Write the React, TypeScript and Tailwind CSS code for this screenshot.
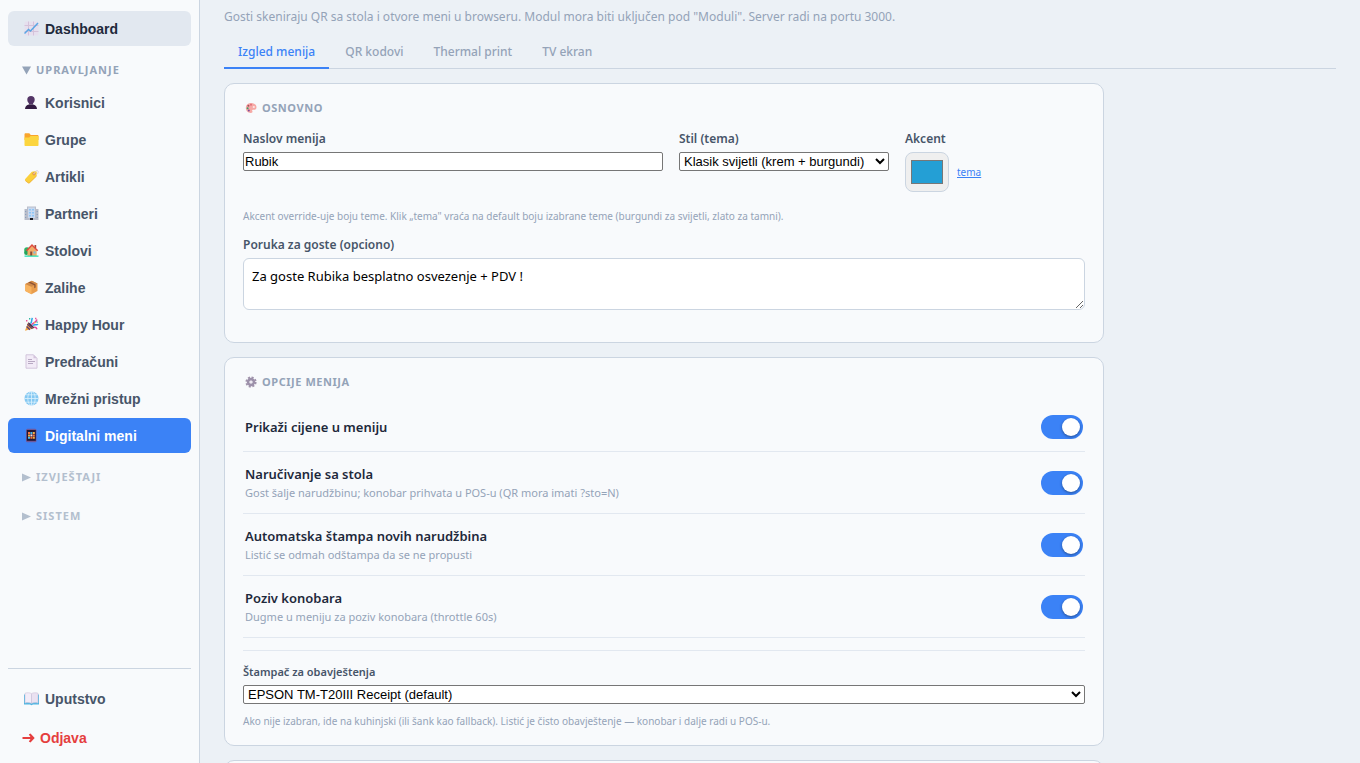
import { useState, type ReactNode } from 'react'

const iconClass = 'size-[15px] shrink-0'

function ChartIcon() {
  return (
    <svg viewBox="0 0 15 15" className={iconClass} aria-hidden="true">
      <rect x="0.5" y="0.5" width="14" height="14" rx="1.5" fill="#e6dfee" />
      <path d="M4.500 .5v14M9.500 .5v14M.5 4.500h14M.5 10.500h14" stroke="#d5c2da" strokeWidth="1" />
      <path d="M.5 12.500 4.500 8.500 6.500 10 14 2" fill="none" stroke="#5aa6e4" strokeWidth="1.500" />
    </svg>
  )
}

function UserIcon() {
  return (
    <svg viewBox="0 0 15 15" className={iconClass} aria-hidden="true">
      <path d="M7 1c2.300 0 3.700 1.400 3.700 3.600 0 1.700-.6 2.900-1.600 3.700v1.200H4.900V8.300C3.900 7.500 3.300 6.300 3.300 4.600 3.300 2.400 4.700 1 7 1Z" fill="#533566" />
      <path d="M1 14c.2-2.600 1.500-4 4-4.500h4c2.500.5 3.800 1.900 4 4.500Z" fill="#321b41" />
    </svg>
  )
}

function FolderIcon() {
  return (
    <svg viewBox="0 0 15 15" className={iconClass} aria-hidden="true">
      <path d="M.5 2.500c0-.8.4-1.200 1.200-1.200h3.600l1.500 1.700h6.500c.8 0 1.200.4 1.200 1.200V8H.5Z" fill="#f9a52c" />
      <path d="M.5 5.500h4.700L6.500 4h8v8.900c0 .7-.3 1.100-1 1.100h-12c-.7 0-1-.4-1-1.100Z" fill="#fcd53f" />
    </svg>
  )
}

function TagIcon() {
  return (
    <svg viewBox="0 0 15 15" className={iconClass} aria-hidden="true">
      <path d="M1.200 10 7.800 2.800l4-.8 1 1-.2 4-6.800 6.800c-.5.5-1.200.5-1.700 0l-2.900-2.200c-.4-.4-.4-1.200 0-1.600Z" fill="#fbd03c" />
      <path d="m1.300 11.600 2.600 2.100c.5.500 1.200.5 1.700 0l7-6.700" fill="none" stroke="#eda92f" strokeWidth=".8" />
      <circle cx="10" cy="4.800" r="1.100" fill="#fff" stroke="#d67d3a" strokeWidth=".9" />
      <path d="M10.500 4.200C11 1.500 14.300.5 14.200 3c0 1-.7 2-1.700 2.500" fill="none" stroke="#d6cdd8" strokeWidth=".8" />
    </svg>
  )
}

function BuildingIcon() {
  return (
    <svg viewBox="0 0 15 15" className={iconClass} aria-hidden="true">
      <path d="M3 .5h9V3h2.500v11H.5V3H3Z" fill="#b9bdca" />
      <path d="M4 1.500h7V12H4Z" fill="#c9d8ee" />
      <path d="M5 3h2v1.500H5zm3 0h2v1.500H8zM5 6h2v1.500H5zm3 0h2v1.500H8zM5 9h2v1.500H5zm3 0h2v1.500H8z" fill="#8cc5f7" />
      <path d="M1.200 5h1v1h-1zm0 3h1v1h-1zm0 3h1v1h-1zm11.500-6h1v1h-1zm0 3h1v1h-1zm0 3h1v1h-1z" fill="#8199b8" />
      <path d="M6 12h3v2H6z" fill="#1c1c23" />
    </svg>
  )
}

function HouseIcon() {
  return (
    <svg viewBox="0 0 15 15" className={iconClass} aria-hidden="true">
      <circle cx="3" cy="7" r="2.800" fill="#2db466" />
      <circle cx="2.300" cy="9.800" r="2.200" fill="#22a45a" />
      <path d="M3.500 7 8 2.500 12.700 7v6H3.500Z" fill="#efad69" />
      <path d="M10.500 2h1.700v3h-1.700z" fill="#a54938" />
      <path d="M2.500 7.700 8 2l5.700 5.700" fill="none" stroke="#df4a3e" strokeWidth="1.500" />
      <path d="M6.200 8.500h2V13h-2z" fill="#8a4b38" />
      <path d="M9.500 8.500h2v2h-2z" fill="#78bde8" />
      <path d="M.5 12.500h14v1.300H.5z" fill="#2de0b4" />
    </svg>
  )
}

function BoxIcon() {
  return (
    <svg viewBox="0 0 15 15" className={iconClass} aria-hidden="true">
      <path d="M1.300 4 7.800.8 13.500 3.500v7.600L7.500 14.200 1.300 11Z" fill="#e99d4d" />
      <path d="M1.300 4 7.500 6.800v7.400L1.300 11Z" fill="#f8b35f" />
      <path d="M1.300 4 7.800.8l5.700 2.700-6 3.300Z" fill="#d08a48" />
      <path d="M4.300 2.500 10.300 5.300v3l1.300-.7V4.600L6 1.800Z" fill="#8a5134" />
    </svg>
  )
}

function PartyIcon() {
  return (
    <svg viewBox="0 0 15 15" className={iconClass} aria-hidden="true">
      <path d="M1 13.800 4 5.500l6 5.700Z" fill="#f2a33c" />
      <path d="m2.600 9.500 3.300 3.200M3.400 7.200l5 4.700" stroke="#5b3c74" strokeWidth="1.300" />
      <path d="M4 5.500c1.500-.7 6.700 4.400 6 5.700-1.500.2-6.400-4-6-5.700Z" fill="#483357" />
      <path d="M6.500 6.500C8.300 5.300 7 3 8.500 1M9 8.500c1.500-1.600 3.500.2 5-1.200" fill="none" stroke="#2aa8e8" strokeWidth="1.500" />
      <path d="M8 7.500c1.500-2.500 4-1.500 5-5M10 10.500c1.500-.5 2.500.5 3 1.700" fill="none" stroke="#e3459b" strokeWidth="1.500" />
      <path d="M2 3h1.400v1.400H2zM11 .8h1.400v1.400H11z" fill="#e9549a" />
      <path d="M5 1h1.300v1.400H5zM12.500 4.500h1.300v1.300h-1.300z" fill="#31b7a0" />
      <path d="M10 5h1.200v1.200H10z" fill="#f8bd32" />
    </svg>
  )
}

function PageIcon() {
  return (
    <svg viewBox="0 0 15 15" className={iconClass} aria-hidden="true">
      <path d="M2 .8h7.500L13 4.300v9.900H2Z" fill="#f2ebf7" stroke="#cfc1d8" strokeWidth=".9" />
      <path d="M9.500.8v3.500H13Z" fill="#d3c4dc" />
      <path d="M4 5.500h4M4 7.500h7M4 9.500h5" stroke="#b8a9c3" strokeWidth="1" />
    </svg>
  )
}

function GlobeIcon() {
  return (
    <svg viewBox="0 0 15 15" className={iconClass} aria-hidden="true">
      <circle cx="7.500" cy="7.500" r="7" fill="#84c8f2" />
      <path d="M7.500.5v14M.5 7.500h14M2 3.800h11M2 11.200h11" stroke="#dcf1fd" strokeWidth=".8" />
      <ellipse cx="7.500" cy="7.500" rx="3.700" ry="7" fill="none" stroke="#dcf1fd" strokeWidth=".8" />
    </svg>
  )
}

function PhoneIcon() {
  return (
    <svg viewBox="0 0 15 15" className={iconClass} aria-hidden="true">
      <rect x="2" y=".8" width="10.500" height="13.500" rx="1.500" fill="#70589a" />
      <rect x="2.800" y="2" width="9" height="10.800" fill="#211735" />
      <path d="M4 4h2v2H4zm4.800 2.400h2v2h-2zM6.400 8.800h2v2h-2z" fill="#f5743f" />
      <path d="M6.400 4h2v2h-2zM4 8.800h2v2H4z" fill="#45b6ee" />
      <path d="M8.800 4h2v2h-2zM4 6.400h2v2H4zM8.800 8.800h2v2h-2z" fill="#f4ad42" />
      <path d="M6.400 6.400h2v2h-2z" fill="#e7e1ee" />
    </svg>
  )
}

function BookIcon() {
  return (
    <svg viewBox="0 0 15 15" className={iconClass} aria-hidden="true">
      <path d="M0 3.500h15v10H9l-1.500.8-1.500-.8H0Z" fill="#4fb5e2" />
      <path d="M1 2.200c2.500-.7 5-.6 6.500.5v9.600c-2-.8-4.300-.9-6.500-.3Z" fill="#f3ecf8" stroke="#cfc3d9" strokeWidth=".6" />
      <path d="M14 2.200c-2.500-.7-5-.6-6.500.5v9.600c2-.8 4.300-.9 6.500-.3Z" fill="#eae1f1" stroke="#cfc3d9" strokeWidth=".6" />
    </svg>
  )
}

function ArrowIcon() {
  return (
    <svg viewBox="0 0 13 12" className="h-3 w-[13px] shrink-0" aria-hidden="true">
      <path d="M.5 5H8.500L6.800 2.500 8.500 1.500 12.700 6 8.500 10.500 6.800 9.500 8.500 7H.5Z" fill="#e53e3e" />
    </svg>
  )
}

function PaletteIcon() {
  return (
    <svg viewBox="0 0 12 12" className="size-3 shrink-0" aria-hidden="true">
      <path d="M5.500 1C8.800.6 11.500 2.500 11.500 5.200c0 2.200-1.700 2.900-3.200 2.600-1.100-.2-1.500.5-1 1.300.6 1.100-.2 2.100-1.600 1.900C2.700 10.700.8 8.600.8 5.900.8 3.300 2.700 1.300 5.500 1Z" fill="#f6a9a5" />
      <circle cx="8.800" cy="5" r="1.100" fill="#fbe8e8" />
      <circle cx="6" cy="2.800" r="1" fill="#e0707a" />
      <circle cx="3.400" cy="3.700" r="1" fill="#a8485f" />
      <circle cx="2.600" cy="6.200" r="1" fill="#3f9c68" />
      <circle cx="3.800" cy="8.500" r="1" fill="#7b4b9b" />
    </svg>
  )
}

function GearIcon() {
  return (
    <svg viewBox="0 0 12 12" className="size-3 shrink-0" aria-hidden="true">
      <circle cx="6" cy="6" r="4.700" fill="none" stroke="#a093ab" strokeWidth="1.800" strokeDasharray="2.100 1.590" />
      <circle cx="6" cy="6" r="2.900" fill="none" stroke="#9c90aa" strokeWidth="2.600" />
      <circle cx="6" cy="6" r="1.300" fill="#eee9f2" />
    </svg>
  )
}

const manageItems = [
  { label: 'Korisnici', icon: <UserIcon /> },
  { label: 'Grupe', icon: <FolderIcon /> },
  { label: 'Artikli', icon: <TagIcon /> },
  { label: 'Partneri', icon: <BuildingIcon /> },
  { label: 'Stolovi', icon: <HouseIcon /> },
  { label: 'Zalihe', icon: <BoxIcon /> },
  { label: 'Happy Hour', icon: <PartyIcon /> },
  { label: 'Predračuni', icon: <PageIcon /> },
  { label: 'Mrežni pristup', icon: <GlobeIcon /> },
  { label: 'Digitalni meni', icon: <PhoneIcon /> },
]

function NavItem({ label, icon, tone = 'text-[#475569]' }: { label: string; icon: ReactNode; tone?: string }) {
  return (
    <button
      type="button"
      className={`flex h-[35px] w-full items-center gap-1.5 rounded-md px-4 text-left font-['Liberation_Sans',Arial,sans-serif] text-sm font-bold ${tone}`}
    >
      {icon}
      {label}
    </button>
  )
}

function SectionToggle({ label, open }: { label: string; open?: boolean }) {
  return (
    <button
      type="button"
      aria-expanded={!!open}
      className={`mt-3 mb-[3px] flex h-6 w-full items-center gap-[5px] px-3.5 text-[11px] font-bold tracking-[1px] uppercase ${open ? 'text-[#94a3b8]' : 'text-[#b3bfce]'}`}
    >
      <svg viewBox="0 0 9 9" className="size-[9px]" aria-hidden="true">
        <path d={open ? 'M0 .5h9L4.500 8.500Z' : 'M0 .5 9 4.500 0 8.500Z'} fill="currentColor" />
      </svg>
      {label}
    </button>
  )
}

function Sidebar() {
  return (
    <aside className="flex w-[200px] shrink-0 flex-col border-r border-[#cbd5e1] bg-[#f8fafc] px-2 pt-[11px] pb-2">
      <nav className="flex flex-col">
        <NavItem label="Dashboard" icon={<ChartIcon />} tone="bg-[#e2e8f0] text-[#1e293b]" />
        <SectionToggle label="Upravljanje" open />
        <div className="flex flex-col gap-0.5">
          {manageItems.map((item) => (
            <NavItem
              key={item.label}
              label={item.label}
              icon={item.icon}
              tone={item.label === 'Digitalni meni' ? 'bg-[#3b82f6] text-white' : 'text-[#475569]'}
            />
          ))}
        </div>
        <SectionToggle label="Izvještaji" />
        <SectionToggle label="Sistem" />
      </nav>
      <div className="mt-auto flex flex-col gap-1 border-t border-[#cbd5e1] pt-3">
        <NavItem label="Uputstvo" icon={<BookIcon />} />
        <button
          type="button"
          className="flex h-[35px] w-full items-center gap-[5px] px-3.5 font-['Liberation_Sans',Arial,sans-serif] text-sm font-bold text-[#e53e3e]"
        >
          <ArrowIcon />
          Odjava
        </button>
      </div>
    </aside>
  )
}

function Card({ icon, title, children }: { icon: ReactNode; title: string; children?: ReactNode }) {
  return (
    <section className="rounded-[10px] border border-[#cbd5e1] bg-[#f8fafc] px-[18px] py-4">
      <h2 className="mb-3.5 flex items-center gap-[5px] pl-0.5 text-[11px] leading-[15px] font-bold tracking-wider text-[#94a3b8] uppercase">
        {icon}
        {title}
      </h2>
      {children}
    </section>
  )
}

const labelClass = 'mb-1 block text-xs leading-[19px] font-semibold text-[#475569]'
const hintClass = 'text-[10px] leading-[15px] text-[#94a3b8]'
const nativeClass =
  "block h-[19px] w-full rounded-[2px] border border-[#767676] bg-white font-['Liberation_Sans',Arial,sans-serif] text-[13px] leading-4 text-black"

function ToggleRow({ id, title, hint }: { id: string; title: string; hint?: string }) {
  const [on, setOn] = useState(true)
  return (
    <div className="flex items-center justify-between border-b border-[#e2e8f0] px-0.5 py-3">
      <label htmlFor={id}>
        <span className="block text-[13px] leading-5 font-semibold text-[#1e293b]">{title}</span>
        {hint && <span className="block text-[11px] leading-[17px] text-[#94a3b8]">{hint}</span>}
      </label>
      <input
        id={id}
        type="checkbox"
        role="switch"
        checked={on}
        onChange={() => setOn(!on)}
        className="h-6 w-[42px] shrink-0 appearance-none rounded-full bg-[#cbd5e1] p-[3px] before:block before:size-[18px] before:rounded-full before:bg-white before:shadow-[0_1px_3px_rgba(0,0,0,0.4)] checked:bg-[#3b82f6] checked:before:ml-[18px]"
      />
    </div>
  )
}

const tabs = ['Izgled menija', 'QR kodovi', 'Thermal print', 'TV ekran']

export default function App() {
  const [tab, setTab] = useState(tabs[0])
  const [accent, setAccent] = useState('#249fd5')
  return (
    <div className="flex h-screen overflow-hidden bg-[#ecf1f6] font-['Noto_Sans',sans-serif]">
      <Sidebar />
      <main className="min-w-0 flex-1 overflow-hidden px-6 pt-2">
        <p className="text-xs leading-[18px] text-[#94a3b8]">
          Gosti skeniraju QR sa stola i otvore meni u browseru. Modul mora biti uključen pod "Moduli". Server radi na
          portu 3000.
        </p>
        <div role="tablist" className="mt-2 mb-3.5 flex h-[35px] gap-0.5 border-b border-[#cbd5e1]">
          {tabs.map((name) => (
            <button
              key={name}
              type="button"
              role="tab"
              aria-selected={tab === name}
              onClick={() => setTab(name)}
              className={`-mb-px border-b-2 px-3.5 pt-0.5 text-xs font-medium ${tab === name ? 'border-[#3b82f6] text-[#3b82f6]' : 'border-transparent text-[#94a3b8]'}`}
            >
              {name}
            </button>
          ))}
        </div>
        <div className="flex max-w-[880px] flex-col gap-3.5">
          <Card icon={<PaletteIcon />} title="Osnovno">
            <div className="mb-[17px] grid grid-cols-[2fr_1fr_180px] gap-4">
              <div>
                <label htmlFor="title" className={labelClass}>
                  Naslov menija
                </label>
                <input id="title" defaultValue="Rubik" className={`${nativeClass} px-px`} />
              </div>
              <div>
                <label htmlFor="theme" className={labelClass}>
                  Stil (tema)
                </label>
                <select id="theme" className={nativeClass}>
                  <option>Klasik svijetli (krem + burgundi)</option>
                </select>
              </div>
              <div>
                <label htmlFor="accent" className={labelClass}>
                  Akcent
                </label>
                <div className="flex items-center gap-2">
                  <input
                    id="accent"
                    type="color"
                    value={accent}
                    onChange={(e) => setAccent(e.target.value)}
                    className="h-10 w-11 rounded-lg border border-[#cbd5e1] bg-[#efefef] p-[3px]"
                  />
                  <a href="#tema" className="text-[10px] text-[#3b82f6] underline">
                    tema
                  </a>
                </div>
              </div>
            </div>
            <p className={hintClass}>
              Akcent override-uje boju teme. Klik „tema" vraća na default boju izabrane teme (burgundi za svijetli,
              zlato za tamni).
            </p>
            <label htmlFor="message" className={`${labelClass} mt-[11px]`}>
              Poruka za goste (opciono)
            </label>
            <textarea
              id="message"
              defaultValue="Za goste Rubika besplatno osvezenje + PDV !"
              className="mb-4 block h-[52px] w-full resize rounded-md border border-[#cbd5e1] bg-white p-2 text-[13px] leading-[19px] text-black"
            />
          </Card>
          <Card icon={<GearIcon />} title="Opcije menija">
            <ToggleRow id="prices" title="Prikaži cijene u meniju" />
            <ToggleRow
              id="orders"
              title="Naručivanje sa stola"
              hint="Gost šalje narudžbinu; konobar prihvata u POS-u (QR mora imati ?sto=N)"
            />
            <ToggleRow
              id="autoprint"
              title="Automatska štampa novih narudžbina"
              hint="Listić se odmah odštampa da se ne propusti"
            />
            <ToggleRow id="waiter" title="Poziv konobara" hint="Dugme u meniju za poziv konobara (throttle 60s)" />
            <div className="mt-3 border-t border-[#e2e8f0] pt-3">
              <label htmlFor="printer" className="mb-[5px] block text-[11px] leading-[17px] font-semibold text-[#475569]">
                Štampač za obavještenja
              </label>
              <select id="printer" className={nativeClass}>
                <option>EPSON TM-T20III Receipt (default)</option>
              </select>
              <p className={`${hintClass} mt-2.5`}>
                Ako nije izabran, ide na kuhinjski (ili šank kao fallback). Listić je čisto obavještenje — konobar i
                dalje radi u POS-u.
              </p>
            </div>
          </Card>
          <section className="h-24 rounded-[10px] border border-[#cbd5e1] bg-[#f8fafc]" />
        </div>
      </main>
    </div>
  )
}
